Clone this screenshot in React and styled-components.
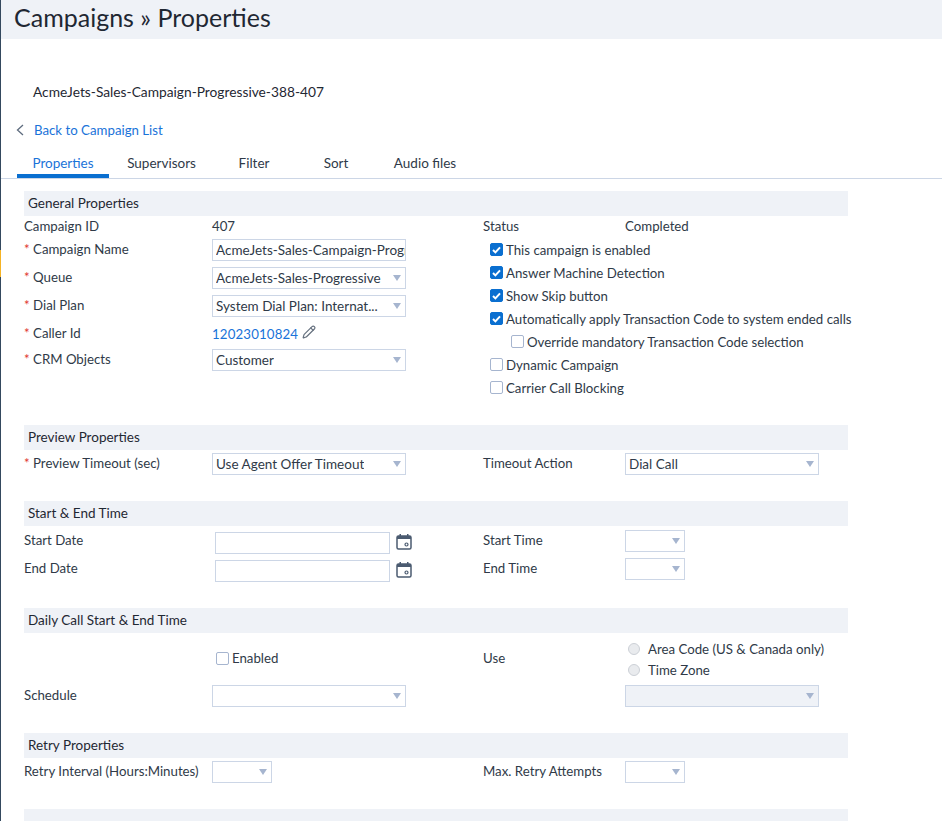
import styled, { createGlobalStyle } from 'styled-components';
import { Pencil } from 'lucide-react';

const GlobalStyle = createGlobalStyle`
  html, body {
    margin: 0;
    padding: 0;
    height: 100%;
    overflow: hidden;
    background: #fff;
  }
  body {
    font-family: 'Lato', 'Noto Sans', sans-serif;
    font-size: 13.25px;
    color: #2f3a48;
  }
  * {
    box-sizing: border-box;
  }
`;

const generalChecks = [
  { label: 'This campaign is enabled', checked: true },
  { label: 'Answer Machine Detection', checked: true },
  { label: 'Show Skip button', checked: true },
  { label: 'Automatically apply Transaction Code to system ended calls', checked: true },
  { label: 'Override mandatory Transaction Code selection', nested: true },
  { label: 'Dynamic Campaign' },
  { label: 'Carrier Call Blocking' },
];

const tabs = [
  { label: 'Properties', width: 92, active: true },
  { label: 'Supervisors', width: 105 },
  { label: 'Filter', width: 80 },
  { label: 'Sort', width: 84 },
  { label: 'Audio files', width: 94 },
];

const Check = ({ checked, nested, children }) => (
  <CheckRow $nested={nested}>
    <CheckBox $checked={checked}>
      {checked && (
        <svg width="9" height="8" viewBox="0 0 9 8">
          <path d="M1 4l2.4 2.4L8 1.4" fill="none" stroke="#fff" strokeWidth="2" />
        </svg>
      )}
    </CheckBox>
    {children}
  </CheckRow>
);

const Dropdown = ({ width, disabled, children }) => (
  <Select $width={width} $disabled={disabled}>
    <SelectText>{children}</SelectText>
    <Caret />
  </Select>
);

const CalendarIcon = () => (
  <CalendarSvg width="16" height="17" viewBox="0 0 16 17">
    <rect x="1" y="3" width="14" height="13" rx="1.5" fill="none" stroke="#4b5b70" strokeWidth="1.5" />
    <rect x="1" y="3" width="14" height="3" fill="#4b5b70" />
    <rect x="3.5" y="1" width="1.5" height="3" fill="#4b5b70" />
    <rect x="11" y="1" width="1.5" height="3" fill="#4b5b70" />
    <circle cx="10.5" cy="11.5" r="1.5" fill="none" stroke="#4b5b70" strokeWidth="1.2" />
  </CalendarSvg>
);

const App = () => (
  <Page>
    <GlobalStyle />
    <Rail>
      <RailMarker />
    </Rail>
    <Main>
      <Header>Campaigns » Properties</Header>
      <CampaignTitle>AcmeJets-Sales-Campaign-Progressive-388-407</CampaignTitle>
      <BackRow>
        <svg width="8" height="12" viewBox="0 0 8 12">
          <path d="M7 1L1.5 6 7 11" fill="none" stroke="#5d6b7e" strokeWidth="1.3" />
        </svg>
        <BackLink>Back to Campaign List</BackLink>
      </BackRow>
      <TabBar>
        {tabs.map((tab) => (
          <Tab key={tab.label} $width={tab.width} $active={tab.active}>
            {tab.label}
          </Tab>
        ))}
      </TabBar>

      <Content>
        <Section>
          <SectionTitle>General Properties</SectionTitle>
          <Columns>
            <Column>
              <Field $height={23} $bottom={2} $shift={0}>
                <Label>Campaign ID</Label>
                <Value>407</Value>
              </Field>
              <Field $height={28} $top>
                <Label $required>Campaign Name</Label>
                <TextInput readOnly value="AcmeJets-Sales-Campaign-Progressive-388-407" />
              </Field>
              <Field $height={28} $top>
                <Label $required>Queue</Label>
                <Dropdown>AcmeJets-Sales-Progressive</Dropdown>
              </Field>
              <Field $height={28} $top>
                <Label $required>Dial Plan</Label>
                <Dropdown>System Dial Plan: Internat...</Dropdown>
              </Field>
              <Field $height={26} $shift={-6}>
                <Label $required>Caller Id</Label>
                <CallerId>
                  <CallerLink>12023010824</CallerLink>
                  <PencilIcon size={14} strokeWidth={2} />
                </CallerId>
              </Field>
              <Field $height={22} $top>
                <Label $required>CRM Objects</Label>
                <Dropdown>Customer</Dropdown>
              </Field>
            </Column>
            <Column>
              <RightField $height={22} $bottom={2} $shift={0}>
                <Label>Status</Label>
                <Value>Completed</Value>
              </RightField>
              {generalChecks.map((item) => (
                <Check key={item.label} checked={item.checked} nested={item.nested}>
                  {item.label}
                </Check>
              ))}
            </Column>
          </Columns>
        </Section>

        <Section>
          <SectionTitle>Preview Properties</SectionTitle>
          <Columns $top={3}>
            <Column>
              <Field $height={22}>
                <Label $required>Preview Timeout (sec)</Label>
                <Dropdown>Use Agent Offer Timeout</Dropdown>
              </Field>
            </Column>
            <Column>
              <RightField $height={22}>
                <Label>Timeout Action</Label>
                <Dropdown>Dial Call</Dropdown>
              </RightField>
            </Column>
          </Columns>
        </Section>

        <Section>
          <SectionTitle>Start &amp; End Time</SectionTitle>
          <Columns $top={6}>
            <Column>
              <Field $height={28} $top $shift={-2}>
                <Label>Start Date</Label>
                <DateWrap>
                  <DateInput />
                  <CalendarIcon />
                </DateWrap>
              </Field>
              <Field $height={22} $top $shift={-2}>
                <Label>End Date</Label>
                <DateWrap>
                  <DateInput />
                  <CalendarIcon />
                </DateWrap>
              </Field>
            </Column>
            <Column $lift={2}>
              <RightField $height={28} $top>
                <Label>Start Time</Label>
                <Dropdown width={60} />
              </RightField>
              <RightField $height={22} $top>
                <Label>End Time</Label>
                <Dropdown width={60} />
              </RightField>
            </Column>
          </Columns>
        </Section>

        <Section>
          <SectionTitle>Daily Call Start &amp; End Time</SectionTitle>
          <Columns>
            <Column>
              <Field $height={52}>
                <span />
                <EnabledRow>
                  <CheckBox />
                  Enabled
                </EnabledRow>
              </Field>
              <Field $height={22}>
                <Label>Schedule</Label>
                <Dropdown />
              </Field>
            </Column>
            <Column>
              <RightField $height={52}>
                <Label>Use</Label>
                <RadioGroup>
                  <RadioRow>
                    <Radio />
                    Area Code (US &amp; Canada only)
                  </RadioRow>
                  <RadioRow>
                    <Radio />
                    Time Zone
                  </RadioRow>
                </RadioGroup>
              </RightField>
              <RightField $height={22}>
                <span />
                <Dropdown disabled />
              </RightField>
            </Column>
          </Columns>
        </Section>

        <Section>
          <SectionTitle>Retry Properties</SectionTitle>
          <Columns $top={3}>
            <Column>
              <Field $height={22}>
                <Label>Retry Interval (Hours:Minutes)</Label>
                <Dropdown width={60} />
              </Field>
            </Column>
            <Column>
              <RightField $height={22}>
                <Label>Max. Retry Attempts</Label>
                <Dropdown width={60} />
              </RightField>
            </Column>
          </Columns>
        </Section>

        <Section>
          <SectionTitle />
        </Section>
      </Content>
    </Main>
  </Page>
);

const Page = styled.div`
  display: flex;
  height: 821px;
  overflow: hidden;
`;

const Rail = styled.div`
  flex: 0 0 1px;
  background: #34495e;
`;

const RailMarker = styled.div`
  margin-top: 250px;
  height: 27px;
  background: #f5b324;
`;

const Main = styled.main`
  flex: 1;
  min-width: 0;
`;

const Header = styled.h1`
  margin: 0;
  height: 39px;
  padding-left: 13px;
  background: #eff2f7;
  font-size: 25px;
  font-weight: 400;
  line-height: 35px;
  color: #1f2833;
`;

const CampaignTitle = styled.div`
  margin-top: 43px;
  padding-left: 32px;
  font-size: 13.75px;
  line-height: 20px;
  color: #1f2833;
`;

const BackRow = styled.div`
  display: flex;
  align-items: center;
  gap: 10px;
  height: 20px;
  margin-top: 18px;
  padding-left: 15px;
`;

const BackLink = styled.a`
  color: #1a73d9;
`;

const TabBar = styled.div`
  display: flex;
  height: 31px;
  margin-top: 8px;
  padding-left: 16px;
  border-bottom: 1px solid #ccd6e6;
`;

const Tab = styled.div`
  width: ${(p) => p.$width}px;
  height: 30px;
  font-size: 13.5px;
  line-height: 30px;
  text-align: center;
  color: ${(p) => (p.$active ? '#1a73d9' : '#2f3a48')};
  border-bottom: 4px solid ${(p) => (p.$active ? '#0a6fd0' : 'transparent')};
`;

const Content = styled.div`
  width: 847px;
  margin-top: 12px;
  padding-left: 23px;
`;

const Section = styled.section`
  margin-bottom: 26px;
`;

const SectionTitle = styled.h2`
  margin: 0;
  height: 25px;
  padding-left: 4px;
  background: #eff2f7;
  font-size: 13.5px;
  font-weight: 400;
  line-height: 25px;
  color: #1f2833;
`;

const Columns = styled.div`
  display: grid;
  grid-template-columns: 459px 1fr;
  padding-top: ${(p) => p.$top || 0}px;
`;

const Column = styled.div`
  display: flex;
  flex-direction: column;
  margin-top: ${(p) => -(p.$lift || 0)}px;
`;

const Field = styled.div`
  display: grid;
  grid-template-columns: 188px 1fr;
  align-items: ${(p) => (p.$top ? 'start' : 'center')};
  height: ${(p) => p.$height}px;
  padding-bottom: ${(p) => p.$bottom || 0}px;

  label {
    margin-top: ${(p) => p.$shift ?? (p.$top ? 0 : -2)}px;
  }
`;

const RightField = styled(Field)`
  grid-template-columns: 142px 1fr;
`;

const Label = styled.label`
  line-height: 21px;
  &::before {
    content: ${(p) => (p.$required ? "'* '" : 'none')};
    color: #e0342f;
  }
`;

const Value = styled.span`
  line-height: 21px;
`;

const TextInput = styled.input`
  width: 194px;
  height: 22px;
  padding: 0 0 0 3px;
  border: 1px solid #ccd6e6;
  outline: none;
  font: inherit;
  font-size: 13.5px;
  color: #2f3a48;
  background: #fff;
`;

const Select = styled.div`
  display: flex;
  align-items: center;
  justify-content: space-between;
  width: ${(p) => p.$width || 194}px;
  height: 22px;
  padding: 0 4px 0 3px;
  border: 1px solid #ccd6e6;
  background: ${(p) => (p.$disabled ? '#eff2f7' : '#fff')};
`;

const SelectText = styled.span`
  font-size: 13.5px;
  white-space: nowrap;
  overflow: hidden;
`;

const Caret = styled.span`
  flex: none;
  width: 0;
  height: 0;
  margin-left: auto;
  border-left: 4.5px solid transparent;
  border-right: 4.5px solid transparent;
  border-top: 6px solid #a6b5cf;
`;

const CallerId = styled.div`
  display: flex;
  align-items: center;
  gap: 4px;
  padding-bottom: 4px;
`;

const CallerLink = styled.a`
  color: #1a73d9;
  letter-spacing: 0.15px;
`;

const PencilIcon = styled(Pencil)`
  color: #66717f;
  margin-top: -4px;
`;

const CheckRow = styled.label`
  display: flex;
  align-items: center;
  gap: 3px;
  height: 23px;
  padding-left: ${(p) => (p.$nested ? 28 : 7)}px;
  white-space: nowrap;
`;

const CheckBox = styled.span`
  display: inline-flex;
  flex: none;
  align-items: center;
  justify-content: center;
  width: 13px;
  height: 13px;
  border: 1px solid ${(p) => (p.$checked ? '#0a6fd0' : '#a6b5cf')};
  border-radius: 2px;
  background: ${(p) => (p.$checked ? '#0a6fd0' : '#fff')};
`;

const EnabledRow = styled.label`
  display: flex;
  align-items: center;
  gap: 3px;
  padding-left: 4px;
`;

const RadioGroup = styled.div`
  margin-top: 2px;
`;

const RadioRow = styled.label`
  display: flex;
  align-items: center;
  gap: 8px;
  height: 23px;
  padding-left: 3px;
  white-space: nowrap;
`;

const Radio = styled.span`
  flex: none;
  width: 12px;
  height: 12px;
  border: 1px solid #ccd0d6;
  border-radius: 50%;
  background: #e9ebee;
`;

const DateWrap = styled.div`
  display: flex;
  align-items: center;
  gap: 6px;
  padding-left: 3px;
`;

const DateInput = styled.input`
  width: 175px;
  height: 22px;
  padding: 0 3px;
  border: 1px solid #ccd6e6;
  outline: none;
  background: #fff;
`;

const CalendarSvg = styled.svg`
  flex: none;
  margin-top: -4px;
`;

export default App;
